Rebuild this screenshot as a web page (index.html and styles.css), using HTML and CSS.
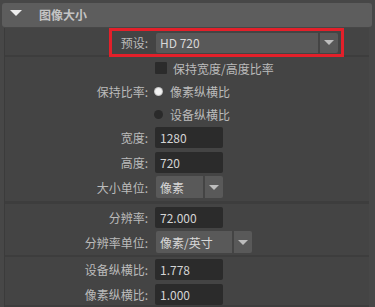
FILE: index.html
```html
<!DOCTYPE html>
<html lang="zh-CN">

<head>
    <meta charset="UTF-8">
    <title>图像大小</title>
    <link rel="stylesheet" href="styles.css">
</head>

<body>
    <div class="attr-panel">
        <div class="frame-header">
            <span class="fold-arrow"></span>
            <span class="frame-title">图像大小</span>
        </div>
        <div class="frame-body">
            <div class="section section-preset">
                <div class="highlight">
                    <label class="preset-label">预设:</label>
                    <div class="dropdown dd-preset">
                        <span class="dd-main">HD 720</span>
                        <span class="dd-btn"><i class="tri"></i></span>
                    </div>
                </div>
            </div>

            <div class="section section-size">
                <div class="row row-check">
                    <span class="label"></span>
                    <span class="checkbox"></span>
                    <span class="opt-text">保持宽度/高度比率</span>
                </div>
                <div class="row row-radio">
                    <span class="label">保持比率:</span>
                    <span class="radio checked"></span>
                    <span class="opt-text radio-text">像素纵横比</span>
                </div>
                <div class="row row-radio">
                    <span class="label"></span>
                    <span class="radio"></span>
                    <span class="opt-text radio-text">设备纵横比</span>
                </div>
                <div class="row row-field first-field">
                    <span class="label">宽度:</span>
                    <span class="field">1280</span>
                </div>
                <div class="row row-field">
                    <span class="label">高度:</span>
                    <span class="field">720</span>
                </div>
                <div class="row row-menu">
                    <span class="label">大小单位:</span>
                    <div class="dropdown dd-unit">
                        <span class="dd-main">像素</span>
                        <span class="dd-btn"><i class="tri"></i></span>
                    </div>
                </div>
            </div>

            <div class="section section-res">
                <div class="row row-field res-first">
                    <span class="label">分辨率:</span>
                    <span class="field">72.000</span>
                </div>
                <div class="row row-menu">
                    <span class="label">分辨率单位:</span>
                    <div class="dropdown dd-res">
                        <span class="dd-main">像素/英寸</span>
                        <span class="dd-btn"><i class="tri"></i></span>
                    </div>
                </div>
            </div>

            <div class="section section-aspect">
                <div class="row row-field aspect-first">
                    <span class="label">设备纵横比:</span>
                    <span class="field">1.778</span>
                </div>
                <div class="row row-field">
                    <span class="label">像素纵横比:</span>
                    <span class="field">1.000</span>
                </div>
            </div>
        </div>
    </div>
</body>

</html>
```

FILE: styles.css
```css
* {
    padding: 0;
    margin: 0;
    box-sizing: border-box;
}

body {
    background-color: #474747;
    font-family: "Noto Sans CJK SC", "Noto Sans", sans-serif;
    font-size: 12px;
    color: #bbbbbb;
    height: 307px;
    overflow: hidden;
}

.attr-panel {
    padding: 3px 3px 0 2px;
}

.frame-header {
    height: 24px;
    background-color: #5d5d5d;
    border-radius: 3px;
    display: flex;
    align-items: center;
}

.fold-arrow {
    align-self: flex-start;
    margin-top: 7px;
    margin-left: 8px;
    width: 0;
    height: 0;
    border-left: 6px solid transparent;
    border-right: 6px solid transparent;
    border-top: 6px solid #eeeeee;
}

.frame-title {
    margin-left: 17px;
    font-weight: bold;
    color: #c4c4c4;
    line-height: 16px;
}

.frame-body {
    margin: 1px 0 0 2px;
    width: 365px;
    height: 290px;
    background-color: #444444;
    border-left: 1px solid #3b3b3b;
}

.section {
    border-bottom: 3px solid #3d3d3d;
}

.section-preset {
    height: 29px;
    border-bottom-width: 2px;
}

.highlight {
    display: flex;
    align-items: center;
    margin-left: 104px;
    width: 235px;
    height: 29px;
    border: 3px solid #e3202a;
    padding-right: 3px;
}

.preset-label {
    width: 36px;
    text-align: right;
    margin-right: 8px;
}

.row {
    display: flex;
    align-items: center;
}

.label {
    width: 143px;
    text-align: right;
    margin-right: 7px;
    white-space: nowrap;
}

.row-check,
.row-radio {
    height: 23px;
}

.checkbox {
    width: 12px;
    height: 12px;
    background-color: #2b2b2b;
    border-radius: 1px;
    margin-top: -1px;
}

.opt-text {
    margin-left: 6px;
}

.radio {
    width: 9px;
    height: 9px;
    border-radius: 50%;
    background-color: #2a2a2a;
    margin-left: -1px;
}

.radio.checked {
    background: radial-gradient(circle, #f2f2f2 0 45%, #a8a8a8 75%, #7a7a7a 100%);
}

.radio-text {
    margin-left: 7px;
}

.row-field {
    height: 21px;
    margin-top: 4px;
}

.first-field {
    margin-top: 1px;
}

.field {
    width: 68px;
    height: 21px;
    line-height: 21px;
    padding-left: 5px;
    background-color: #2b2b2b;
    border-radius: 2px;
    color: #d4d4d4;
}

.row-menu {
    height: 22px;
    margin-top: 3px;
}

.dropdown {
    display: flex;
    gap: 2px;
    height: 20px;
}

.row-menu .dropdown {
    height: 22px;
    margin-left: 1px;
}

.dd-main {
    flex: 1;
    background-color: #595959;
    border-radius: 2px 0 0 2px;
    padding-left: 4px;
    color: #d8d8d8;
    display: flex;
    align-items: center;
}

.dd-btn {
    width: 18px;
    background-color: #595959;
    border-radius: 0 2px 2px 0;
    display: flex;
    align-items: center;
    justify-content: center;
}

.tri {
    width: 0;
    height: 0;
    border-left: 5px solid transparent;
    border-right: 5px solid transparent;
    border-top: 5px solid #bdbdbd;
}

.dd-preset {
    width: 182px;
}

.dd-unit {
    width: 67px;
}

.dd-res {
    width: 96px;
}

.section-size {
    padding-bottom: 3px;
}

.section-res {
    padding-bottom: 2px;
    border-bottom-width: 2px;
}

.res-first {
    margin-top: 3px;
}

.aspect-first {
    margin-top: 2px;
}
```
